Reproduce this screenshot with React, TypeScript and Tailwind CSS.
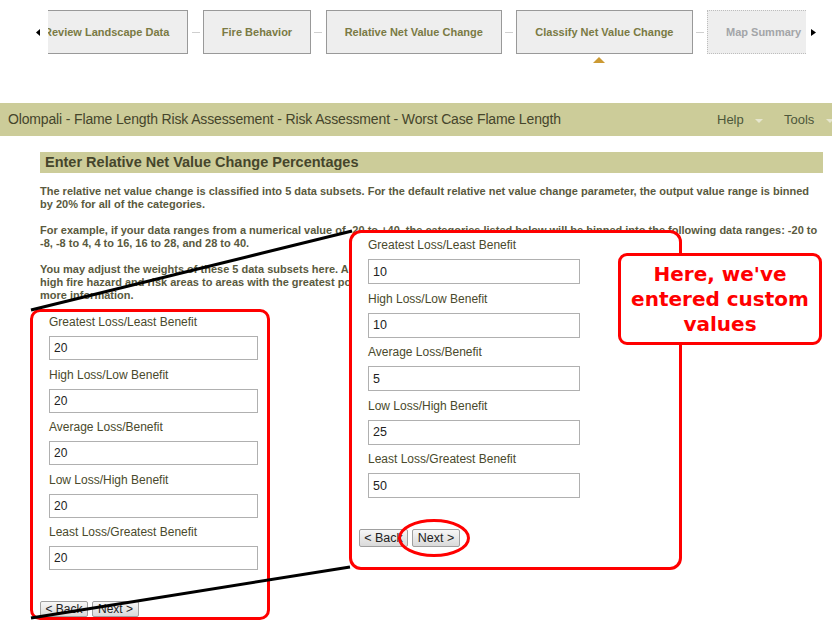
import React from "react"

const steps = [
  { label: "Review Landscape Data" },
  { label: "Fire Behavior" },
  { label: "Relative Net Value Change" },
  { label: "Classify Net Value Change", current: true },
  { label: "Map Summary", disabled: true },
]

const leftValues = ["20", "20", "20", "20", "20"]
const rightValues = ["10", "10", "5", "25", "50"]
const fieldLabels = [
  "Greatest Loss/Least Benefit",
  "High Loss/Low Benefit",
  "Average Loss/Benefit",
  "Low Loss/High Benefit",
  "Least Loss/Greatest Benefit",
]

const Caret = ({ className }: { className?: string }) => (
  <svg width="8" height="4" viewBox="0 0 8 4" className={className}>
    <polygon points="0,0 8,0 4,4" fill="#e6e6cf" />
  </svg>
)

const StepBar = () => (
  <div className="flex items-start pt-[10px]">
    <div className="w-[48px] h-[44px] flex items-center justify-end pr-[8px]">
      <svg width="4" height="7" viewBox="0 0 4 7">
        <polygon points="4,0 4,7 0,3.5" fill="#000" />
      </svg>
    </div>
    <div className="w-[758px] h-[54px] overflow-hidden">
      <div className="flex items-start ml-[-23px]">
        {steps.map((s, i) => (
          <React.Fragment key={s.label}>
            {i > 0 && (
              <div className="w-[14.5px] h-[44px] shrink-0 flex items-center justify-center">
                <div className="w-[8px] h-px bg-[#cfcfcf]" />
              </div>
            )}
            <div
              className={
                s.disabled
                  ? "relative h-[44px] shrink-0 flex items-center px-[18px] border border-dotted border-[#bdbdbd] bg-[#eeeeee] text-[11px] font-bold text-[#a3a5a8] whitespace-nowrap"
                  : "relative h-[44px] shrink-0 flex items-center px-[18px] border border-[#999999] bg-[#eeeeee] text-[11px] font-bold text-[#7a7a44] whitespace-nowrap"
              }
            >
              {s.label}
              {s.current && (
                <svg
                  width="12"
                  height="6"
                  viewBox="0 0 12 6"
                  className="absolute left-[76px] top-[46px]"
                >
                  <polygon points="0,6 12,6 6,0" fill="#cc9a33" />
                </svg>
              )}
            </div>
          </React.Fragment>
        ))}
      </div>
    </div>
    <div className="h-[44px] flex items-center pl-[5px]">
      <svg width="5" height="7" viewBox="0 0 5 7">
        <polygon points="0,0 0,7 5,3.5" fill="#000" />
      </svg>
    </div>
  </div>
)

const Field = ({
  label,
  value,
  big,
}: {
  label: string
  value: string
  big?: boolean
}) => (
  <div className={big ? "mb-[7.5px] last:mb-0" : "mb-[7.5px] last:mb-0"}>
    <div className="text-[12px] leading-[14px] mb-[7px] text-[#4a4a2c]">{label}</div>
    <input
      readOnly
      value={value}
      className={
        big
          ? "block w-[212px] h-[25px] border border-[#b0b0b0] px-[4px] text-[12.5px] text-[#222] outline-none"
          : "block w-[209px] h-[24px] border border-[#b0b0b0] px-[4px] text-[12px] text-[#222] outline-none"
      }
    />
  </div>
)

const Buttons = ({ big }: { big?: boolean }) => {
  const cls = big
    ? "h-[18px] px-0 rounded-[2px] border border-[#a0a0a0] bg-linear-to-b from-[#f7f7f7] to-[#dadada] text-[12.5px] leading-none text-[#222]"
    : "h-[16px] px-0 rounded-[2px] border border-[#a0a0a0] bg-linear-to-b from-[#f7f7f7] to-[#dadada] text-[12px] leading-none text-[#222]"
  return (
    <div className="flex gap-[4px] ml-[-9px]">
      <button className={big ? cls + " w-[49px]" : cls + " w-[48px]"}>{"< Back"}</button>
      <button className={big ? cls + " w-[48px]" : cls + " w-[47px]"}>{"Next >"}</button>
    </div>
  )
}

export default function App() {
  return (
    <div className="relative w-[832px] h-[631px] overflow-hidden bg-white font-['Liberation_Sans',Arial,sans-serif]">
      <StepBar />

      <div className="mt-[39px] h-[33px] bg-[#cccc99] flex items-stretch">
        <div className="w-[704px] shrink-0 flex items-center pl-[8px] text-[14px] tracking-[-0.15px] text-[#45452b] whitespace-nowrap">
          Olompali - Flame Length Risk Assessement - Risk Assessment - Worst Case Flame Length
        </div>
        <div className="w-px bg-white" />
        <div className="w-[67px] shrink-0 flex items-center pl-[13px] text-[13px] text-[#4d573a]">
          Help
          <Caret className="ml-[11px] mt-[3px]" />
        </div>
        <div className="w-px bg-white" />
        <div className="flex-1 flex items-center pl-[13px] text-[13px] text-[#4d573a] whitespace-nowrap">
          Tools
          <Caret className="ml-[12px] mt-[3px] shrink-0" />
        </div>
      </div>

      <div className="pl-[40px] pr-[9px]">
        <div className="mt-[16px] h-[21px] bg-[#cccc99] flex items-center pl-[5px] text-[14.5px] font-bold text-[#45452b]">
          Enter Relative Net Value Change Percentages
        </div>

        <div className="text-[11px] font-bold leading-[13px] text-[#5a5a3e] whitespace-nowrap">
          <p className="mt-[12px]">
            The relative net value change is classified into 5 data subsets. For the default relative net value change parameter, the output value range is binned
            <br />
            by 20% for all of the categories.
          </p>
          <p className="mt-[13px]">
            For example, if your data ranges from a numerical value of -20 to +40, the categories listed below will be binned into the following data ranges: -20 to
            <br />
            -8, -8 to 4, 4 to 16, 16 to 28, and 28 to 40.
          </p>
          <p className="mt-[13px]">
            You may adjust the weights of these 5 data subsets here. Adjusting the percentages will shift the emphasis of the output from
            <br />
            high fire hazard and risk areas to areas with the greatest potential benefit. Please see the Help documentation for
            <br />
            more information.
          </p>
        </div>

        <div className="mt-[7px] ml-[-10px] w-[240px] h-[311px] rounded-[10px] border-[3px] border-[#ff0000] pt-[3px] pl-[16px]">
          {fieldLabels.map((l, i) => (
            <Field key={l} label={l} value={leftValues[i]} />
          ))}
          <div className="mt-[31px]">
            <Buttons />
          </div>
        </div>
      </div>

      <svg width="832" height="631" className="absolute left-0 top-0 pointer-events-none">
        <line x1="31" y1="310" x2="352" y2="231" stroke="#000" strokeWidth="3" />
        <line x1="31" y1="618" x2="350" y2="567" stroke="#000" strokeWidth="3" />
      </svg>

      <div className="absolute left-[349px] top-[230px] w-[333px] h-[340px] rounded-[12px] border-[3px] border-[#ff0000] bg-white pt-[5px] pl-[16px]">
        {fieldLabels.map((l, i) => (
          <Field key={l} label={l} value={rightValues[i]} big />
        ))}
        <div className="mt-[31px]">
          <Buttons big />
        </div>
      </div>

      <div className="absolute left-[618px] top-[253px] w-[204px] h-[92px] rounded-[9px] border-[3px] border-[#ff0000] bg-white flex flex-col items-center justify-center text-center font-['DejaVu_Sans',sans-serif] text-[20px] font-bold leading-[25px] text-[#ff0000]">
        <div>Here, we've</div>
        <div>entered custom</div>
        <div>values</div>
      </div>

      <svg width="832" height="631" className="absolute left-0 top-0 pointer-events-none">
        <ellipse cx="434" cy="538" rx="34.5" ry="17.5" fill="none" stroke="#ff0000" strokeWidth="3" />
      </svg>
    </div>
  )
}
